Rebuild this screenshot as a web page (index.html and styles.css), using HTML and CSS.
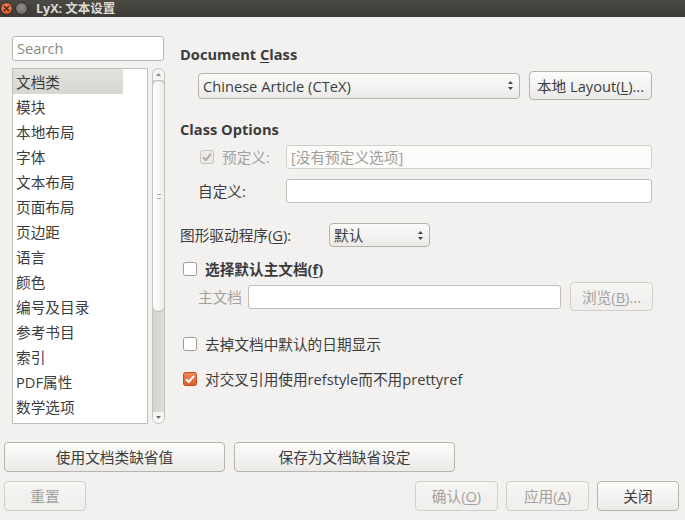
FILE: index.html
```html
<!DOCTYPE html>
<html>
<head>
<meta charset="utf-8">
<title>LyX: 文本设置</title>
<link rel="stylesheet" href="styles.css">
</head>
<body>
<div class="titlebar">
  <span class="wbtn close"><svg width="7" height="7" viewBox="0 0 7 7"><path d="M1 1L6 6M6 1L1 6" stroke="#3b2a22" stroke-width="1.4"/></svg></span>
  <span class="wbtn min"></span>
  <span class="title">LyX: 文本设置</span>
</div>
<div class="main">
  <div class="side">
    <div class="search">Search</div>
    <div class="listwrap">
      <ul class="list">
        <li class="sel">文档类</li>
        <li>模块</li>
        <li>本地布局</li>
        <li>字体</li>
        <li>文本布局</li>
        <li>页面布局</li>
        <li>页边距</li>
        <li>语言</li>
        <li>颜色</li>
        <li>编号及目录</li>
        <li>参考书目</li>
        <li>索引</li>
        <li>PDF属性</li>
        <li>数学选项</li>
      </ul>
      <div class="scroll">
        <div class="sarrow"><svg width="5" height="3" viewBox="0 0 5 3"><path d="M0 3L2.5 0L5 3Z" fill="#8a8782"/></svg></div>
        <div class="thumb"><span class="grip"></span></div>
        <div class="track"></div>
        <div class="sarrow"><svg width="5" height="3" viewBox="0 0 5 3"><path d="M0 0L2.5 3L5 0Z" fill="#6e6b66"/></svg></div>
      </div>
    </div>
  </div>
  <div class="panel">
    <div class="heading h-doc">Document <u>C</u>lass</div>
    <div class="row r-class">
      <div class="combo c-class">Chinese Article (CTeX)<span class="arrows"><svg width="7" height="11" viewBox="0 0 7 11"><path d="M1 4L3.5 1L6 4Z M1 7L3.5 10L6 7Z" fill="#4a4844"/></svg></span></div>
      <div class="btn b-layout">本地 Layout(<u>L</u>)...</div>
    </div>
    <div class="heading h-opt">Class Options</div>
    <div class="row r-pre">
      <div class="lab lab-pre">
        <svg class="cb" width="14" height="14" viewBox="0 0 14 14"><rect x="0.5" y="0.5" width="13" height="13" rx="2" fill="#eceae7" stroke="#c8c5c0"/><path d="M3 7.2L5.8 10L11 3.8" fill="none" stroke="#aeaba6" stroke-width="2"/></svg>
        <span class="dis">预定义:</span>
      </div>
      <div class="input inp-dis"><span class="ph">[没有预定义选项]</span></div>
    </div>
    <div class="row r-custom">
      <div class="lab lab-ind">自定义:</div>
      <div class="input"></div>
    </div>
    <div class="row r-gfx">
      <div class="lab lab-gfx">图形驱动程序(<u>G</u>):</div>
      <div class="combo c-gfx">默认<span class="arrows"><svg width="7" height="11" viewBox="0 0 7 11"><path d="M1 4L3.5 1L6 4Z M1 7L3.5 10L6 7Z" fill="#4a4844"/></svg></span></div>
    </div>
    <div class="row r-chk r-master">
      <svg class="cb" width="14" height="14" viewBox="0 0 14 14"><rect x="0.5" y="0.5" width="13" height="13" rx="2" fill="#ffffff" stroke="#9d9a94"/></svg>
      <span class="bold">选择默认主文档(<u>f</u>)</span>
    </div>
    <div class="row r-mainfile">
      <div class="lab lab-main dis">主文档</div>
      <div class="input inp-main"></div>
      <div class="btn dis b-browse">浏览(<u>B</u>)...</div>
    </div>
    <div class="row r-chk r-date">
      <svg class="cb" width="14" height="14" viewBox="0 0 14 14"><rect x="0.5" y="0.5" width="13" height="13" rx="2" fill="#ffffff" stroke="#9d9a94"/></svg>
      <span>去掉文档中默认的日期显示</span>
    </div>
    <div class="row r-chk r-ref">
      <svg class="cb" width="14" height="14" viewBox="0 0 14 14"><defs><linearGradient id="og" x1="0" y1="0" x2="0" y2="1"><stop offset="0" stop-color="#f2875a"/><stop offset="1" stop-color="#de5a26"/></linearGradient></defs><rect x="0.5" y="0.5" width="13" height="13" rx="2" fill="url(#og)" stroke="#bf4e20"/><path d="M3 7.2L5.8 10L11 3.8" fill="none" stroke="#ffffff" stroke-width="2"/></svg>
      <span>对交叉引用使用refstyle而不用prettyref</span>
    </div>
  </div>
</div>
<div class="bottom">
  <div class="brow">
    <div class="btn b-wide">使用文档类缺省值</div>
    <div class="btn b-wide">保存为文档缺省设定</div>
  </div>
  <div class="brow brow2">
    <div class="btn dis b-reset">重置</div>
    <div class="spacer"></div>
    <div class="btn dis b-small">确认(<u>O</u>)</div>
    <div class="btn dis b-small">应用(<u>A</u>)</div>
    <div class="btn b-small b-close">关闭</div>
  </div>
</div>
</body>
</html>
```

FILE: styles.css
```css
* { box-sizing: border-box; margin: 0; padding: 0; }
html, body { width: 685px; height: 520px; overflow: hidden; }
body {
  background: #f2f1f0;
  font-family: "Open Sans", "Noto Sans CJK SC", sans-serif;
  font-size: 14.67px;
  color: #3c3c3c;
  line-height: 18px;
}
u { text-decoration: underline; text-underline-offset: 2px; }

/* title bar */
.titlebar {
  height: 17px;
  background: linear-gradient(#4a4944, #3c3b37);
  display: flex;
  align-items: center;
}
.wbtn {
  width: 13px; height: 13px; border-radius: 50%;
  display: flex; align-items: center; justify-content: center;
}
.close {
  margin-left: 0;
  background: radial-gradient(circle at 50% 35%, #f6855c, #d9461c);
  border: 1px solid #2e2a26;
}
.min {
  margin-left: 2px;
  background: radial-gradient(circle at 50% 40%, #8e8c85 0, #77756f 55%, #5f5d58 100%);
  border: 1px solid #2e2a26;
}
.title {
  margin-left: 8px;
  color: #dfdbd2;
  font-weight: bold;
  font-size: 12.5px;
  line-height: 17px;
}

/* main */
.main {
  height: 425px;
  padding-top: 19px;
  display: flex;
}
.side { margin-left: 12px; width: 153px; }
.search {
  width: 152px; height: 25px;
  border: 1px solid #b9b5af;
  border-radius: 3px;
  background: #fff;
  color: #8b8985;
  padding-left: 4px;
  line-height: 23px;
}
.listwrap { margin-top: 7px; display: flex; gap: 4px; }
.list {
  list-style: none;
  width: 136px; height: 356px;
  border: 1px solid #c0bdb7;
  background: #fff;
  overflow: hidden;
}
.list li {
  height: 25px;
  line-height: 27px;
  overflow: hidden;
  padding-left: 3px;
  width: 110px;
}
.list li.sel { background: linear-gradient(#e2e0dc, #d8d6d1); }

.scroll {
  width: 13px; height: 356px;
  border: 1px solid #c4c1bb;
  border-radius: 7px;
  background: linear-gradient(90deg, #d6d4d0, #dedcd8);
  display: flex; flex-direction: column;
  overflow: hidden;
}
.sarrow {
  height: 11px; flex: none;
  display: flex; align-items: center; justify-content: center;
  background: #f6f5f4;
}
.thumb {
  height: 232px; flex: none;
  background: linear-gradient(90deg, #ffffff, #eeedeb);
  border: 1px solid #bdbab4;
  border-radius: 6px;
  margin: 0 -1px;
  display: flex; align-items: center; justify-content: center;
}
.grip {
  width: 4px; height: 5px;
  border-top: 1px solid #b1aea9;
  border-bottom: 1px solid #b1aea9;
}
.track { flex: 1; }

/* panel */
.panel { margin-left: 15px; width: 473px; }
.heading { font-weight: bold; height: 18px; line-height: 17px; }
.h-doc { margin-top: 10px; }
.h-opt { margin-top: 21px; }
.row { display: flex; align-items: center; }
.r-class { margin-top: 7px; height: 29px; }
.r-pre { margin-top: 6px; height: 24px; }
.r-custom { margin-top: 10px; height: 24px; }
.r-gfx { margin-top: 20px; height: 24px; }
.r-master { margin-top: 13px; height: 18px; }
.r-mainfile { margin-top: 4px; height: 29px; }
.r-date { margin-top: 24px; height: 18px; }
.r-ref { margin-top: 17px; height: 18px; }

.combo {
  height: 26px;
  border: 1px solid #b5b1ab;
  border-radius: 4px;
  background: linear-gradient(#fbfbfa, #ebeae8);
  padding-left: 4px;
  display: flex; align-items: center; justify-content: space-between;
}
.arrows { display: flex; margin-right: 5px; }
.c-class { margin-left: 18px; width: 322px; }
.c-gfx { width: 101px; height: 24px; }

.btn {
  height: 30px;
  border: 1px solid #b7b3ad;
  border-radius: 4px;
  background: linear-gradient(#fcfcfb, #ebeae8);
  display: flex; align-items: center; justify-content: center;
  color: #3c3c3c;
  white-space: nowrap;
}
.btn.dis {
  color: #a4a19c;
  border-color: #d2cfca;
  background: linear-gradient(#f6f5f4, #efeeec);
}
.b-layout { margin-left: 9px; width: 123px; height: 29px; }
.b-browse { margin-left: 9px; width: 83px; height: 29px; }

.dis { color: #a4a19c; }
.lab { width: 106px; flex: none; display: flex; align-items: center; }
.lab-pre { padding-left: 20px; }
.lab-pre .cb { margin-right: 8px; }
.lab-ind { padding-left: 18px; }
.lab-gfx { width: 149px; }
.lab-main { width: 68px; padding-left: 18px; }

.input {
  height: 24px;
  width: 366px;
  border: 1px solid #c1bdb7;
  border-radius: 3px;
  background: #fff;
  padding-left: 4px;
  line-height: 22px;
}
.inp-dis { border-color: #d3d0cb; background: #fbfbfa; }
.ph { color: #a09d98; }
.inp-main { width: 313px; }

.r-chk .cb { margin-left: 3px; margin-right: 8px; flex: none; }
.bold { font-weight: bold; }

/* bottom */
.brow { display: flex; gap: 9px; padding-left: 4px; }
.brow2 { margin-top: 9px; gap: 0; padding-right: 6px; }
.b-wide { width: 221px; }
.b-reset { width: 82px; }
.spacer { flex: 1; }
.b-small { width: 83px; margin-left: 8px; }
.b-close { width: 82px; }
```
